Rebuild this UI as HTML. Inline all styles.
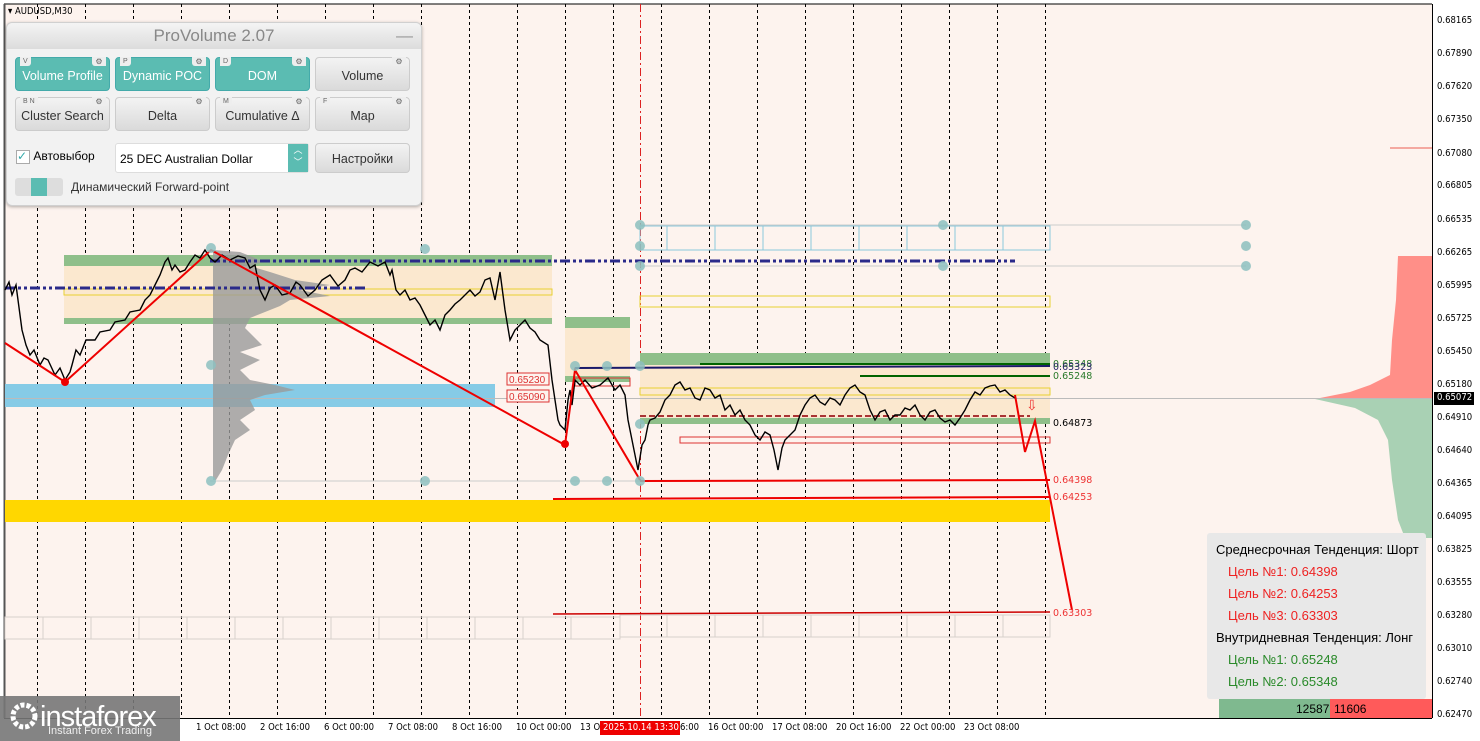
<!DOCTYPE html>
<html><head><meta charset="utf-8"><style>
body{margin:0;width:1480px;height:741px;overflow:hidden;background:#fff;font-family:"Liberation Sans","DejaVu Sans",sans-serif;position:relative}
.ax{position:absolute;left:1437px;font-size:10px;color:#000;font-family:"DejaVu Sans",sans-serif;transform:scaleX(.85);transform-origin:left}
.tl{position:absolute;top:722px;font-size:10px;font-family:"DejaVu Sans",sans-serif;transform:scaleX(.85);transform-origin:left;white-space:nowrap}
.panel{position:absolute;left:6px;top:22px;width:414px;height:182px;background:#f2f2f2;border:1px solid #d0d0d0;border-radius:6px;box-shadow:0 1px 3px rgba(0,0,0,.3)}
.hdr{height:26px;background:linear-gradient(#f4f4f4,#dcdcdc);border-radius:6px 6px 0 0;text-align:center;font-size:17px;color:#888;line-height:26px}
.btn{position:absolute;width:95px;height:34px;border-radius:4px;font-size:12.5px;text-align:center;line-height:36px;border:1px solid #ccc;box-sizing:border-box}
.on{background:#5bbcb2;color:#fff;border-color:#4aa}
.off{background:linear-gradient(#f3f3f3,#dadada);color:#333}
.tg{position:absolute;left:4px;top:-1px;height:9px;font-size:7px;line-height:9px;color:#666;background:#eee;border-radius:0 0 3px 0;padding:0 3px}
.gear{position:absolute;right:3px;top:-1px;width:14px;height:9px;background:#eee;border-radius:0 0 0 3px;font-size:8px;line-height:9px;color:#666}
.box{position:absolute;left:1207px;top:533px;width:219px;height:166px;background:#e8e8e8;border-radius:3px;font-size:13px;line-height:22px}
</style></head><body>
<svg width="1480" height="741" style="position:absolute;left:0;top:0">
<rect x="0" y="0" width="1480" height="741" fill="#fff"/>
<rect x="4" y="4" width="1428" height="714" fill="#fdf3ee"/>
<line x1="4" y1="4" x2="1432" y2="4" stroke="#000"/>
<line x1="4.5" y1="4" x2="4.5" y2="718" stroke="#555" stroke-width="2"/>
<line x1="1432.5" y1="4" x2="1432.5" y2="718" stroke="#000"/>
<line x1="4" y1="718.5" x2="1432" y2="718.5" stroke="#000"/>
<g stroke="#000" stroke-dasharray="3,3" stroke-width="1">
<line x1="37.5" y1="4" x2="37.5" y2="718"/><line x1="85.5" y1="4" x2="85.5" y2="718"/><line x1="133.5" y1="4" x2="133.5" y2="718"/><line x1="181.5" y1="4" x2="181.5" y2="718"/><line x1="229.5" y1="4" x2="229.5" y2="718"/><line x1="277.5" y1="4" x2="277.5" y2="718"/><line x1="325.5" y1="4" x2="325.5" y2="718"/><line x1="373.5" y1="4" x2="373.5" y2="718"/><line x1="421.5" y1="4" x2="421.5" y2="718"/><line x1="469.5" y1="4" x2="469.5" y2="718"/><line x1="517.5" y1="4" x2="517.5" y2="718"/><line x1="565.5" y1="4" x2="565.5" y2="718"/><line x1="613.5" y1="4" x2="613.5" y2="718"/><line x1="661.5" y1="4" x2="661.5" y2="718"/><line x1="709.5" y1="4" x2="709.5" y2="718"/><line x1="757.5" y1="4" x2="757.5" y2="718"/><line x1="805.5" y1="4" x2="805.5" y2="718"/><line x1="853.5" y1="4" x2="853.5" y2="718"/><line x1="901.5" y1="4" x2="901.5" y2="718"/><line x1="949.5" y1="4" x2="949.5" y2="718"/><line x1="997.5" y1="4" x2="997.5" y2="718"/><line x1="1045.5" y1="4" x2="1045.5" y2="718"/>
</g>
<line x1="640.5" y1="4" x2="640.5" y2="718" stroke="#d22" stroke-dasharray="8,3,2,3"/>
<rect x="64" y="255" width="488" height="11" fill="#8fbf8a"/>
<rect x="64" y="266" width="488" height="52" fill="#fbe8cf"/>
<rect x="64" y="318" width="488" height="6" fill="#8fbf8a"/>
<rect x="5" y="384" width="490" height="23" fill="#86cbe6"/>
<rect x="565" y="317" width="65" height="11" fill="#8fbf8a"/>
<rect x="565" y="328" width="65" height="48" fill="#fbe8cf"/>
<rect x="565" y="376" width="65" height="6" fill="#8fbf8a"/>
<rect x="640" y="353" width="410" height="12" fill="#8fbf8a"/>
<rect x="640" y="365" width="410" height="53" fill="#fbe8cf"/>
<rect x="640" y="418" width="410" height="6" fill="#8fbf8a"/>
<rect x="5" y="500" width="1045" height="22" fill="#ffd700"/>
<g fill="none" stroke="#8cc8dc"><rect x="640" y="226" width="410" height="24"/><line x1="667" y1="226" x2="667" y2="250"/><line x1="715" y1="226" x2="715" y2="250"/><line x1="763" y1="226" x2="763" y2="250"/><line x1="811" y1="226" x2="811" y2="250"/><line x1="859" y1="226" x2="859" y2="250"/><line x1="907" y1="226" x2="907" y2="250"/><line x1="955" y1="226" x2="955" y2="250"/><line x1="1003" y1="226" x2="1003" y2="250"/></g>
<g fill="none" stroke="#e8d030"><rect x="640" y="296" width="410" height="11"/><rect x="64" y="289" width="488" height="6"/><rect x="640" y="388" width="410" height="7"/></g>
<g fill="none" stroke="#d33"><rect x="680" y="437" width="370" height="6"/><rect x="575" y="378" width="55" height="8"/></g>
<g stroke="#ccc" fill="none"><line x1="640" y1="225" x2="1246" y2="225"/><line x1="640" y1="266" x2="1246" y2="266"/><line x1="210" y1="481" x2="640" y2="481"/><line x1="5" y1="398.5" x2="1432" y2="398.5" stroke="#bbb"/></g>
<g fill="none" stroke="#d8d0cc"><rect x="5" y="617" width="615" height="22"/><rect x="620" y="615" width="430" height="22"/>
<path d="M43 617v22M91 617v22M139 617v22M187 617v22M235 617v22M283 617v22M331 617v22M379 617v22M427 617v22M475 617v22M523 617v22M571 617v22M667 615v22M715 615v22M763 615v22M811 615v22M859 615v22M907 615v22M955 615v22M1003 615v22"/></g>
<path d="M213 250 L240 252 L255 258 L262 262 L250 266 L270 272 L295 280 L330 285 L300 290 L330 296 L290 300 L280 306 L265 312 L250 318 L245 328 L262 345 L240 352 L260 360 L240 370 L250 380 L275 385 L295 390 L265 395 L250 400 L255 410 L240 420 L250 430 L235 440 L228 455 L222 470 L216 480 L213 480 Z" fill="#9a9a9a" opacity=".8"/>
<path d="M1432 256 L1398 256 L1396 300 L1392 340 L1390 375 L1370 385 L1350 392 L1320 398 L1432 398Z" fill="#ff8f88"/>
<path d="M1432 399 L1315 399 L1355 408 L1378 420 L1388 440 L1392 480 L1398 520 L1405 538 L1432 538Z" fill="#a9d1b4"/>
<line x1="1390" y1="148" x2="1432" y2="148" stroke="#f4a8a0" stroke-width="2"/>
<line x1="5" y1="288" x2="365" y2="288" stroke="#2a2a8a" stroke-width="3" stroke-dasharray="10,3,3,3,3,3"/>
<line x1="210" y1="261" x2="1015" y2="261" stroke="#2a2a8a" stroke-width="3" stroke-dasharray="10,3,3,3,3,3"/>
<line x1="575" y1="368" x2="1050" y2="366" stroke="#1a1a6a" stroke-width="2"/>
<line x1="700" y1="364" x2="1050" y2="364" stroke="#006400" stroke-width="2"/>
<line x1="860" y1="376" x2="1050" y2="376" stroke="#006400" stroke-width="2"/>
<line x1="640" y1="481" x2="1050" y2="480" stroke="#e00" stroke-width="2"/>
<line x1="553" y1="499" x2="1050" y2="497" stroke="#e00" stroke-width="2"/>
<line x1="553" y1="614" x2="1050" y2="612" stroke="#c00" stroke-width="1.5"/>
<line x1="640" y1="416" x2="1030" y2="416" stroke="#a33" stroke-width="2" stroke-dasharray="6,3"/>
<polyline fill="none" stroke="#000" stroke-width="1.4" points="5,290 9,282 12,295 16,285 18,300 22,330 26,345 30,355 34,350 40,365 44,358 48,360 55,375 60,368 65,380 70,372 72,365 76,350 80,355 86,340 95,340 100,332 110,330 115,322 125,320 130,312 140,310 145,300 150,295 155,285 160,275 165,262 168,258 172,270 175,265 180,272 185,270 190,262 195,255 200,258 205,250 210,258 215,262 222,255 230,260 238,256 245,258 250,268 255,265 260,290 265,300 270,288 275,285 282,295 290,293 296,282 300,285 308,296 315,290 322,280 330,275 338,286 345,280 350,270 355,268 362,272 370,262 378,266 385,262 390,275 392,270 396,290 400,295 405,290 410,300 415,298 420,305 425,315 430,325 435,320 440,330 445,315 450,310 455,304 460,300 465,295 470,290 475,296 480,292 485,280 490,278 495,300 500,272 505,310 510,340 515,330 520,325 525,320 530,328 535,332 540,340 548,345 552,380 555,400 558,420 560,425 565,430 568,400 570,390 572,405 575,380 580,385 585,380 592,388 600,385 608,378 615,390 620,385 625,395 628,420 632,440 635,455 638,470 642,445 645,440 648,425 650,420 655,418 660,412 665,400 670,395 675,385 680,382 685,390 690,388 695,398 700,400 705,388 710,390 715,398 720,395 725,410 730,405 735,415 740,410 745,420 750,425 755,435 760,440 765,432 770,435 774,450 778,470 782,448 785,440 790,435 795,430 800,415 805,405 810,398 815,395 820,402 825,405 830,398 835,400 840,405 845,395 850,388 855,385 860,392 865,395 870,410 875,420 880,412 885,410 890,420 895,415 900,415 905,408 910,410 915,405 920,415 925,420 930,412 935,410 940,418 945,422 950,420 955,425 960,418 965,410 970,400 975,392 980,395 985,388 990,386 995,385 1000,392 1005,390 1010,395 1015,398"/>
<polyline fill="none" stroke="#e00" stroke-width="2" points="5,343 65,382 211,250 565,445 575,370 640,480"/>
<polyline fill="none" stroke="#e00" stroke-width="2" points="1015,395 1025,452 1035,421 1072,610"/>
<circle cx="65" cy="382" r="4" fill="#e00"/><circle cx="565" cy="444" r="4" fill="#e00"/>
<g fill="#8dc0bf" opacity=".85"><circle cx="211" cy="248" r="5"/><circle cx="425" cy="249" r="5"/><circle cx="211" cy="365" r="5"/><circle cx="211" cy="481" r="5"/><circle cx="425" cy="481" r="5"/><circle cx="575" cy="366" r="5"/><circle cx="607" cy="366" r="5"/><circle cx="575" cy="481" r="5"/><circle cx="607" cy="481" r="5"/><circle cx="640" cy="225" r="5"/><circle cx="640" cy="246" r="5"/><circle cx="640" cy="266" r="5"/><circle cx="640" cy="366" r="5"/><circle cx="640" cy="424" r="5"/><circle cx="640" cy="481" r="5"/><circle cx="943" cy="225" r="5"/><circle cx="943" cy="266" r="5"/><circle cx="1246" cy="225" r="5"/><circle cx="1246" cy="246" r="5"/><circle cx="1246" cy="266" r="5"/></g>
<text x="1026" y="410" fill="#e33" font-size="14">⇩</text>
<rect x="507" y="373" width="42" height="12" fill="#fdf3ee" stroke="#d33"/><text x="509" y="383" fill="#d33" font-size="10">0.65230</text>
<rect x="507" y="390" width="42" height="12" fill="#fdf3ee" stroke="#d33"/><text x="509" y="400" fill="#d33" font-size="10">0.65090</text>
<g font-size="9.5" font-family="DejaVu Sans">
<text x="1053" y="367" fill="#2a7a2a">0.65348</text><text x="1053" y="370" fill="#2a2a6a">0.65323</text><text x="1053" y="379" fill="#2a7a2a">0.65248</text><text x="1053" y="426" fill="#000">0.64873</text><text x="1053" y="483" fill="#e33">0.64398</text><text x="1053" y="500" fill="#e33">0.64253</text><text x="1053" y="616" fill="#e33">0.63303</text></g>
<rect x="1434" y="392" width="40" height="13" fill="#000"/>
<rect x="600" y="721" width="80" height="14" fill="#e00"/>
<rect x="1219" y="699" width="213" height="19" fill="#7fb98f"/><rect x="1330" y="699" width="102" height="19" fill="#ff5a5a"/>
<rect x="0" y="696" width="180" height="45" fill="#777" opacity=".9"/>
<circle cx="24" cy="716" r="11" fill="none" stroke="#fff" stroke-width="5" stroke-dasharray="4,2"/>
</svg>
<div style="position:absolute;left:8px;top:6px;font-size:10px;font-family:'DejaVu Sans',sans-serif;transform:scaleX(.85);transform-origin:left">▾ AUDUSD,M30</div>
<div class="ax" style="top:15px">0.68165</div><div class="ax" style="top:48px">0.67890</div><div class="ax" style="top:81px">0.67620</div><div class="ax" style="top:114px">0.67350</div><div class="ax" style="top:148px">0.67080</div><div class="ax" style="top:180px">0.66805</div><div class="ax" style="top:214px">0.66535</div><div class="ax" style="top:247px">0.66265</div><div class="ax" style="top:280px">0.65995</div><div class="ax" style="top:313px">0.65725</div><div class="ax" style="top:346px">0.65450</div><div class="ax" style="top:379px">0.65180</div><div class="ax" style="top:392px;color:#fff">0.65072</div><div class="ax" style="top:412px">0.64910</div><div class="ax" style="top:445px">0.64640</div><div class="ax" style="top:478px">0.64365</div><div class="ax" style="top:511px">0.64095</div><div class="ax" style="top:544px">0.63825</div><div class="ax" style="top:577px">0.63555</div><div class="ax" style="top:610px">0.63280</div><div class="ax" style="top:643px">0.63010</div><div class="ax" style="top:676px">0.62740</div><div class="ax" style="top:709px">0.62470</div>
<div class="tl" style="left:196px">1 Oct 08:00</div><div class="tl" style="left:260px">2 Oct 16:00</div><div class="tl" style="left:324px">6 Oct 00:00</div><div class="tl" style="left:388px">7 Oct 08:00</div><div class="tl" style="left:452px">8 Oct 16:00</div><div class="tl" style="left:516px">10 Oct 00:00</div><div class="tl" style="left:580px">13 O</div><div class="tl" style="left:603px;color:#fff">2025.10.14 13:30</div><div class="tl" style="left:680px">6:00</div><div class="tl" style="left:708px">16 Oct 00:00</div><div class="tl" style="left:772px">17 Oct 08:00</div><div class="tl" style="left:836px">20 Oct 16:00</div><div class="tl" style="left:900px">22 Oct 00:00</div><div class="tl" style="left:964px">23 Oct 08:00</div>
<div style="position:absolute;left:40px;top:701px;color:#fff;font-size:29px;letter-spacing:-1px">instaforex</div>
<div style="position:absolute;left:48px;top:725px;color:#eee;font-size:11px">Instant Forex Trading</div>
<div class="box"><div style="padding-left:9px;margin-top:6px">Среднесрочная Тенденция: Шорт</div><div style="padding-left:21px;color:#e22">Цель №1: 0.64398</div><div style="padding-left:21px;color:#e22">Цель №2: 0.64253</div><div style="padding-left:21px;color:#e22">Цель №3: 0.63303</div><div style="padding-left:9px">Внутридневная Тенденция: Лонг</div><div style="padding-left:21px;color:#2a8a2a">Цель №1: 0.65248</div><div style="padding-left:21px;color:#2a8a2a">Цель №2: 0.65348</div></div>
<div style="position:absolute;left:1296px;top:702px;font-size:12px">12587</div><div style="position:absolute;left:1334px;top:702px;font-size:12px">11606</div>
<div class="panel"><div class="hdr">ProVolume 2.07<span style="position:absolute;right:8px;color:#999">—</span></div>
<div class="btn on" style="left:8px;top:34px">Volume Profile<span class="tg">V</span><span class="gear">⚙</span></div>
<div class="btn on" style="left:108px;top:34px">Dynamic POC<span class="tg">P</span><span class="gear">⚙</span></div>
<div class="btn on" style="left:208px;top:34px">DOM<span class="tg">D</span><span class="gear">⚙</span></div>
<div class="btn off" style="left:308px;top:34px">Volume<span class="gear">⚙</span></div>
<div class="btn off" style="left:8px;top:74px">Cluster Search<span class="tg">B N</span><span class="gear">⚙</span></div>
<div class="btn off" style="left:108px;top:74px">Delta<span class="gear">⚙</span></div>
<div class="btn off" style="left:208px;top:74px">Cumulative Δ<span class="tg">M</span><span class="gear">⚙</span></div>
<div class="btn off" style="left:308px;top:74px">Map<span class="tg">F</span><span class="gear">⚙</span></div>
<div style="position:absolute;left:9px;top:126px;font-size:12px"><span style="display:inline-block;width:12px;height:12px;border:1px solid #aaa;background:#fff;color:#3aa;line-height:10px">✓</span> Автовыбор</div>
<div style="position:absolute;left:108px;top:120px;width:194px;height:30px;background:#fff;border:1px solid #ddd;border-radius:3px;font-size:12px;line-height:30px;padding-left:4px;box-sizing:border-box">25 DEC Australian Dollar<span style="position:absolute;right:0;top:0;width:20px;height:28px;background:#5bbcb2;color:#fff;font-size:9px;line-height:12px;text-align:center">︿<br>﹀</span></div>
<div class="btn off" style="left:308px;top:120px;height:30px;line-height:30px">Настройки</div>
<div style="position:absolute;left:8px;top:155px;width:48px;height:18px;background:#ddd;border-radius:3px"><div style="margin-left:16px;width:16px;height:18px;background:#5bbcb2"></div></div>
<div style="position:absolute;left:64px;top:157px;font-size:12px;color:#333">Динамический Forward-point</div>
</div>
</body></html>
